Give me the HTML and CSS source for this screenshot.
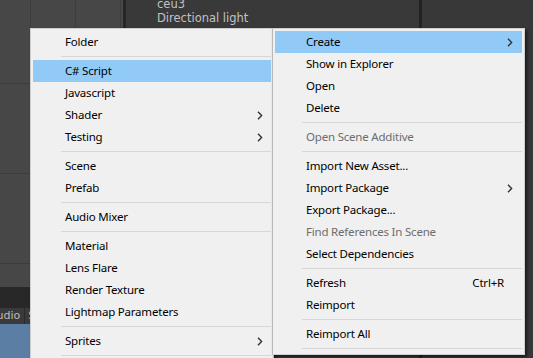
FILE: index.html
```html
<!DOCTYPE html>
<html lang="en">
<head>
    <meta charset="UTF-8">
    <title>Project context menu</title>
    <link rel="stylesheet" href="styles.css">
</head>
<body>

    <div class="editor">
        <!-- Kolom kiri: scene + konsol -->
        <div class="left-col">
            <div class="scene-view"></div>
            <div class="toolbar"></div>
            <div class="tabbar">
                <span class="tab">Audio</span>
                <span class="tab">S</span>
            </div>
            <div class="project-area"></div>
        </div>

        <!-- Hierarchy -->
        <div class="hierarchy">
            <div class="hier-list">
                <div class="hier-row">ceu3</div>
                <div class="hier-row">Directional light</div>
            </div>
        </div>

        <div class="inspector"></div>
    </div>

    <!-- Sub menu Create -->
    <div class="menu menu-create">
        <div class="item">Folder</div>
        <div class="sep"></div>
        <div class="item active">C# Script</div>
        <div class="item">Javascript</div>
        <div class="item">Shader <svg class="arrow" width="6" height="9" viewBox="0 0 6 9"><path d="M1 0.8 L4.6 4.5 L1 8.2" /></svg></div>
        <div class="item">Testing <svg class="arrow" width="6" height="9" viewBox="0 0 6 9"><path d="M1 0.8 L4.6 4.5 L1 8.2" /></svg></div>
        <div class="sep"></div>
        <div class="item">Scene</div>
        <div class="item">Prefab</div>
        <div class="sep"></div>
        <div class="item">Audio Mixer</div>
        <div class="sep"></div>
        <div class="item">Material</div>
        <div class="item">Lens Flare</div>
        <div class="item">Render Texture</div>
        <div class="item">Lightmap Parameters</div>
        <div class="sep"></div>
        <div class="item">Sprites <svg class="arrow" width="6" height="9" viewBox="0 0 6 9"><path d="M1 0.8 L4.6 4.5 L1 8.2" /></svg></div>
        <div class="sep"></div>
    </div>

    <!-- Menu utama -->
    <div class="menu menu-main">
        <div class="item active">Create <svg class="arrow" width="6" height="9" viewBox="0 0 6 9"><path d="M1 0.8 L4.6 4.5 L1 8.2" /></svg></div>
        <div class="item">Show in Explorer</div>
        <div class="item">Open</div>
        <div class="item">Delete</div>
        <div class="sep"></div>
        <div class="item disabled">Open Scene Additive</div>
        <div class="sep"></div>
        <div class="item">Import New Asset...</div>
        <div class="item">Import Package <svg class="arrow" width="6" height="9" viewBox="0 0 6 9"><path d="M1 0.8 L4.6 4.5 L1 8.2" /></svg></div>
        <div class="item">Export Package...</div>
        <div class="item disabled">Find References In Scene</div>
        <div class="item">Select Dependencies</div>
        <div class="sep"></div>
        <div class="item">Refresh <span class="shortcut">Ctrl+R</span></div>
        <div class="item">Reimport</div>
        <div class="sep"></div>
        <div class="item">Reimport All</div>
        <div class="sep"></div>
    </div>

</body>
</html>
```
FILE: styles.css
```css
/* Dasar */
body {
    margin: 0;
    padding: 0;
    width: 533px;
    height: 358px;
    overflow: hidden;
    background: #383838;
    font-family: 'Noto Sans', 'DejaVu Sans', sans-serif;
    position: relative;
}

.editor {
    display: flex;
    height: 358px;
}

/* Kolom kiri */
.left-col {
    width: 123px;
    display: flex;
    flex-direction: column;
}
.scene-view {
    height: 287px;
    background-color: #474747;
    background-image:
        linear-gradient(to right, #3c3c3c 1px, transparent 1px),
        linear-gradient(to bottom, #3c3c3c 1px, transparent 1px);
    background-size: 45px 90px;
    background-position: 30px 83px;
}
.toolbar {
    height: 21px;
    background: #282828;
}
.tabbar {
    height: 16px;
    background: #3a3a3a;
    display: flex;
    font-family: 'DejaVu Sans', sans-serif;
    font-size: 11px;
    line-height: 16px;
    color: #bcbcbc;
    margin-left: -14px;
}
.tab {
    padding: 0 4px 0 3px;
    border-right: 1px solid #2a2a2a;
}
.project-area {
    flex: 1;
    background: #5a7ea4;
}

/* Hierarchy */
.hierarchy {
    width: 293px;
    border-left: 3px solid #262626;
    background: #393939;
    overflow: hidden;
}
.hier-list {
    margin-top: -3px;
    padding-left: 31px;
    font-family: 'DejaVu Sans', sans-serif;
    font-size: 11.5px;
    color: #c2c2c2;
}
.hier-row {
    line-height: 14px;
}

.inspector {
    flex: 1;
    border-left: 3px solid #232323;
    background: #383838;
}

/* Menu konteks */
.menu {
    position: absolute;
    top: 28px;
    background: #f0f0f0;
    border: 1px solid #cfcfcf;
    padding: 2px;
    font-size: 11.5px;
    letter-spacing: -0.2px;
    color: #000;
    box-shadow: 2px 2px 3px rgba(0, 0, 0, 0.55);
}
.menu-create {
    left: 30px;
    width: 238px;
}
.menu-main {
    left: 272px;
    width: 247px;
    border-left-color: #b8b8b8;
}
.item {
    height: 22px;
    line-height: 22px;
    padding-left: 32px;
    display: flex;
    align-items: center;
    white-space: nowrap;
}
.menu-main .item {
    padding-left: 31px;
}
.item.active {
    background: #91c9f7;
}
.item.disabled {
    color: #6d6d6d;
}
.arrow {
    margin-left: auto;
    margin-right: 8px;
}
.arrow path {
    fill: none;
    stroke: #333;
    stroke-width: 1.4;
}
.menu-main .arrow {
    margin-right: 9px;
}
.shortcut {
    margin-left: auto;
    margin-right: 18px;
}
.sep {
    height: 1px;
    background: #d7d7d7;
    margin: 3px 0 3px 28px;
}
.menu-main .sep {
    margin-left: 27px;
}
```
